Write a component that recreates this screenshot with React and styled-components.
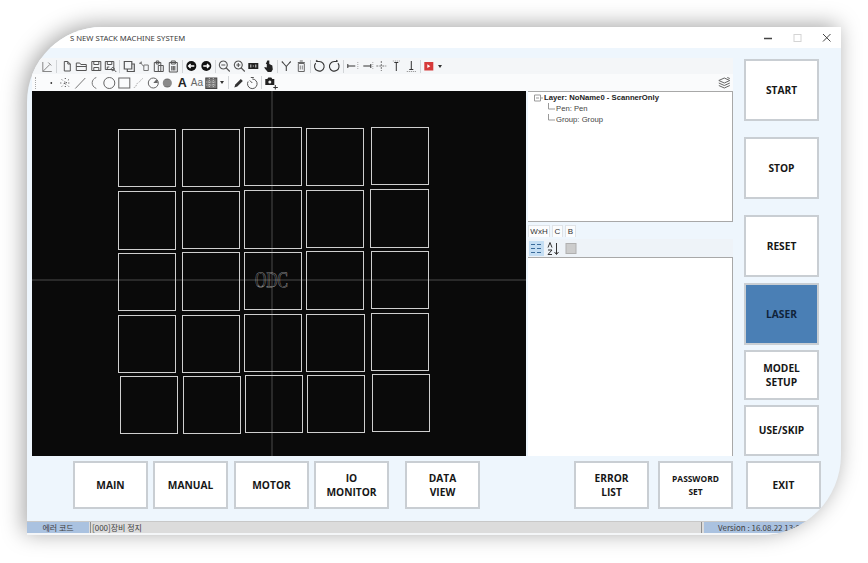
import React from 'react'
import styled, { createGlobalStyle } from 'styled-components'

const GlobalStyle = createGlobalStyle`
  html, body {
    margin: 0;
    padding: 0;
    background: #fff;
    overflow: hidden;
  }
`

const Page = styled.div`
  width: 868px;
  height: 563px;
  padding: 27px 0 0 27px;
  box-sizing: border-box;
  font-family: "Liberation Sans", Arial, sans-serif;
`

const Window = styled.div`
  width: 814px;
  height: 508px;
  display: flex;
  flex-direction: column;
  overflow: hidden;
  background: #eef6fd;
  border-radius: 75px 0 80px 0;
  box-shadow: -3px -2px 22px rgba(0, 0, 0, 0.36);
`

const TitleBar = styled.div`
  height: 21px;
  flex: none;
  display: flex;
  align-items: center;
  background: #fff;
  padding-left: 43px;
  font-family: "Noto Sans", sans-serif;
  font-size: 7.7px;
  color: #3a3a3a;
`

const TitleText = styled.span`
  flex: 1;
`

const WinButton = styled.svg`
  width: 29px;
  height: 14px;
  flex: none;
  stroke: ${p => p.$dim ? '#d4d4d4' : '#444'};
  fill: none;
`

const Main = styled.div`
  height: 408px;
  flex: none;
  display: flex;
  padding: 10px 0 0 5px;
  box-sizing: border-box;
`

const LeftColumn = styled.div`
  width: 701px;
  flex: none;
  display: flex;
  flex-direction: column;
`

const ToolRow = styled.div`
  height: ${p => p.$h}px;
  flex: none;
  display: flex;
  align-items: center;
  padding-left: ${p => p.$pad}px;
  background: ${p => p.$bg};
`

const Tool = styled.svg`
  width: 14.6px;
  height: 14px;
  flex: none;
  fill: none;
  stroke: #555;
  stroke-width: 1;
`

const TextTool = styled.span`
  width: 14.6px;
  flex: none;
  text-align: center;
  font-size: ${p => p.$size}px;
  font-weight: ${p => p.$bold ? 700 : 400};
  color: ${p => p.$bold ? '#222' : '#666'};
  line-height: 14px;
`

const Sep = styled.span`
  width: ${p => p.$w || 3.8}px;
  height: 13px;
  flex: none;
  display: flex;
  justify-content: center;
  &::before {
    content: '';
    width: 1px;
    background: #d2d5d8;
  }
`

const Caret = styled.span`
  width: 0;
  height: 0;
  flex: none;
  margin: 0 3px 0 1px;
  border: 2px solid transparent;
  border-top: 3px solid #333;
  border-bottom: 0;
`

const Grip = styled.span`
  width: 2px;
  height: 12px;
  flex: none;
  margin-right: 5.7px;
  border-left: 1px dotted #aaa;
`

const LayersIcon = styled(Tool)`
  margin-left: auto;
  margin-right: 1px;
`

const Workspace = styled.div`
  display: flex;
  gap: 2px;
  flex: 1;
  min-height: 0;
`

const Canvas = styled.svg`
  display: block;
  width: 494px;
  height: 365px;
  flex: none;
  background: #0a0a0a;
`

const CanvasLabel = styled.text`
  font-family: "Liberation Serif", serif;
  font-size: 22px;
  fill: none;
  stroke: #e2e2e2;
  stroke-width: 0.3;
  text-rendering: geometricPrecision;
`

const SidePanel = styled.div`
  flex: 1;
  display: flex;
  flex-direction: column;
`

const Tree = styled.div`
  height: 131px;
  flex: none;
  background: #fff;
  border: 1px solid #a8a8a8;
  border-width: 1px 1px 1px 0;
  box-sizing: border-box;
  padding: 0 0 0 6px;
  font-size: 7.7px;
  color: #333;
`

const TreeRow = styled.div`
  height: 11px;
  display: flex;
  align-items: center;
  margin-left: ${p => p.$indent || 0}px;
  font-weight: ${p => p.$bold ? 700 : 400};
  color: ${p => p.$bold ? '#222' : '#444'};
`

const TreeGlyph = styled.svg`
  width: ${p => p.$w}px;
  height: 11px;
  flex: none;
  margin-right: 1px;
  stroke: #999;
  fill: none;
`

const Tabs = styled.div`
  height: 16px;
  flex: none;
  display: flex;
  align-items: flex-end;
  gap: 2px;
  padding: 2px 0 1px;
  box-sizing: border-box;
`

const Tab = styled.div`
  width: ${p => p.$w}px;
  height: 12px;
  box-sizing: border-box;
  background: #fbfcfd;
  border: 1px solid #dfe3e7;
  border-bottom: 0;
  text-align: center;
  font-size: 8px;
  line-height: 11px;
  color: #333;
`

const PropBar = styled.div`
  height: 18px;
  flex: none;
  display: flex;
  align-items: center;
  margin-top: 1px;
  gap: 2px;
  padding-left: 1px;
  background: #eef3f8;
`

const PropTool = styled.svg`
  width: 15px;
  height: 15px;
  flex: none;
  fill: none;
  stroke: #555;
  background: ${p => p.$on ? '#c5def3' : 'transparent'};
`

const PropGrid = styled.div`
  flex: 1;
  background: #fff;
  border: 1px solid #a8a8a8;
  border-width: 1px 1px 0 0;
`

const RightColumn = styled.div`
  width: 75px;
  flex: none;
  margin: 1px 0 0 11px;
  display: flex;
  flex-direction: column;
`

const ActionButton = styled.div`
  width: 75px;
  height: ${p => p.$h}px;
  margin-top: ${p => p.$top || 0}px;
  margin-left: ${p => p.$left || 0}px;
  flex: none;
  box-sizing: border-box;
  padding-top: 1px;
  display: flex;
  align-items: center;
  justify-content: center;
  text-align: center;
  background: ${p => p.$active ? '#4a7fb5' : '#fff'};
  border: 2px solid #c9ced3;
  font-family: "Open Sans", sans-serif;
  font-weight: 700;
  font-size: ${p => p.$size || 10.2}px;
  line-height: ${p => p.$size ? 12.5 : 13.5}px;
  color: ${p => p.$active ? '#10233a' : '#161616'};
`

const Nav = styled.div`
  height: 48px;
  flex: none;
  margin-top: 5px;
  padding-left: 46px;
  display: flex;
`

const StatusBar = styled.div`
  height: 12px;
  flex: none;
  margin-top: 12px;
  display: flex;
  background: #dcdcdc;
  border-top: 1px solid #c8c8c8;
  box-sizing: border-box;
  font-family: "Noto Sans CJK KR", "Noto Sans", sans-serif;
  font-size: 8px;
  line-height: 11px;
  color: #404040;
`

const StatusCell = styled.div`
  flex: ${p => p.$w ? 'none' : 1};
  width: ${p => p.$w}px;
  box-sizing: border-box;
  padding-left: ${p => p.$pad || 0}px;
  text-align: ${p => p.$center ? 'center' : 'left'};
  background: ${p => p.$blue ? '#aac2e0' : 'transparent'};
  border-right: ${p => p.$line ? '1px solid #8f8f8f' : '0'};
  white-space: nowrap;
  overflow: hidden;
`

const BottomEdge = styled.div`
  height: 2px;
  flex: none;
  background: #f4f6f8;
`

const rects = [
  [118, 129, 57, 57], [182, 129, 57, 57], [244, 127, 57, 58], [306, 128, 57, 57], [371, 127, 57, 57],
  [118, 191, 57, 58], [182, 191, 57, 57], [244, 190, 57, 58], [306, 190, 57, 57], [370, 189, 58, 58],
  [118, 253, 57, 57], [182, 252, 57, 58], [244, 252, 57, 57], [306, 251, 57, 58], [371, 251, 57, 57],
  [118, 315, 57, 57], [182, 315, 57, 57], [244, 314, 57, 57], [306, 314, 58, 57], [371, 313, 57, 57],
  [120, 376, 57, 57], [183, 376, 57, 57], [245, 375, 57, 57], [307, 375, 57, 57], [372, 374, 57, 57],
]

const glyphs = {
  sketch: <path d="M2.5 3v9.5h9M2.5 12.5l7-7M8 3.5l3 3" stroke="#888" />,
  doc: <path d="M4 2.500h3.500l2.500 2.500v7H4zM7.500 2.500V5H10" />,
  folder: <path d="M2 4h3.500l1 1.500H12v6H2zM2 7.500h10" />,
  save: <path d="M2.500 2.500h9v9h-9zM4.500 2.500v3h5v-3M4.500 11.500V8.500h5v3" />,
  saveAs: <path d="M2 2.500h8.500v8H2zM4 2.500v3h4.500v-3M4 10.500V8h2M9.500 8.500a1.600 1.600 0 1 0 .01 0M11 11l2 2" />,
  copy: <path d="M2 2.500h7.500v7.500H2zM9.500 5H12v7.500H5V10" strokeWidth="1.200" />,
  cut: <path d="M3.500 3l4 4.500M3 4.500h2v-2M7.500 6h4.500v5.500H7.500z" stroke="#777" />,
  paste: <path d="M3 3.500h6.500v9H3zM5 2h2.500v3H5zM7 6.500h5v6H7z" />,
  board: <><path d="M3 3.500h8v9.500H3zM5 2h4v3H5z" /><path d="M5.500 7v4.500M7 7v4.500M8.500 7v4.500" strokeWidth="1.100" /></>,
  back: <><circle cx="7" cy="7" r="5" fill="#111" stroke="none" /><path d="M10 7H4.500M6.300 5L4.300 7l2 2" stroke="#fff" strokeWidth="1.400" /></>,
  forward: <><circle cx="7" cy="7" r="5" fill="#111" stroke="none" /><path d="M4 7h5.500M7.700 5l2 2-2 2" stroke="#fff" strokeWidth="1.400" /></>,
  zoomOut: <path d="M6 2a4 4 0 1 0 .01 0M9 9l3.500 3.500M4 6h4" strokeWidth="1.100" />,
  zoomIn: <path d="M6 2a4 4 0 1 0 .01 0M9 9l3.500 3.500M4 6h4M6 4v4" strokeWidth="1.100" />,
  fit: <><rect x="2" y="4" width="10" height="6" fill="#222" stroke="none" /><path d="M4.500 5.500v3M7 6v.5M7 7.500V8M9.500 5.500v3" stroke="#ddd" /></>,
  hand: <path d="M6 1.500h2V5l3 1.500.5 4L10 13H6.500L3.500 9.500 3 8l2.500.5V5H4.500z" fill="#222" stroke="none" />,
  fork: <path d="M3.500 3.500L7 7.500l3.500-4M7 7.500V12M2.500 2.500l1.500 1.500M11.500 2.500L10 4" strokeWidth="1.100" stroke="#444" />,
  trash: <><path d="M4 4.500h6v8H4zM3.500 3.500h7M5.500 2h3" stroke="#666" /><path d="M6 6.500v4M8 6.500v4" stroke="#888" /></>,
  rotateLeft: <path d="M7 2.500a4.800 4.800 0 1 1-3.600 1.700M7 2.500H3.700M5 1.200L3.700 2.500" strokeWidth="1.100" stroke="#333" />,
  rotateRight: <path d="M7 2.500a4.800 4.800 0 1 0 3.600 1.700M7 2.500h3.300M9 1.200l1.300 1.300" strokeWidth="1.100" stroke="#333" />,
  alignLeft: <><path d="M2.500 5v4M2.500 7H10" stroke="#333" /><path d="M12.500 3v8" strokeDasharray="1 1" stroke="#aaa" /></>,
  alignRight: <><path d="M10.500 5v4M3 7h7.500" stroke="#333" /><path d="M12.500 3v8" strokeDasharray="1 1" stroke="#aaa" /></>,
  alignCross: <path d="M7 2v10M2 7h10" strokeDasharray="2 1" stroke="#777" />,
  alignTop: <><path d="M7 3v9M5 3.500h4" stroke="#333" /><path d="M3.500 2h7" strokeDasharray="1 1" stroke="#999" /></>,
  alignBottom: <><path d="M7 2v9M5 10.500h4" stroke="#333" /><path d="M2.500 12.500h9" strokeDasharray="1 1" stroke="#888" /></>,
  movie: <><rect x="2" y="3" width="9" height="8.500" fill="#d63a3a" stroke="none" /><path d="M5 5.300l3 1.900-3 1.900z" fill="#fff" stroke="none" /></>,
  dot: <circle cx="7" cy="7" r="0.900" fill="#333" stroke="none" />,
  scatter: <path d="M7 2v2M7 10v2M2 7h2M10 7h2M3.500 3.500L5 5M10.500 3.500L9 5M3.500 10.500L5 9M10.500 10.500L9 9M6 6h2v2H6z" strokeDasharray="1 1" stroke="#444" />,
  line: <path d="M2 12.500L12 2" stroke="#777" />,
  arc: <path d="M9 1.500C4 3 3 10 9 12.500" stroke="#777" />,
  circle: <circle cx="7" cy="7" r="5.500" stroke="#666" />,
  square: <rect x="1.500" y="2" width="11" height="10" stroke="#666" />,
  curve: <path d="M2.500 11.500c3 0 2-4 4.500-5s2-3 4.500-4" strokeDasharray="1.500 1" stroke="#aaa" />,
  pie: <><circle cx="7" cy="7" r="5" stroke="#666" /><path d="M7 7h4.500a4.500 4.500 0 0 0-1.500-3.400z" fill="#666" stroke="none" /></>,
  sphere: <><circle cx="7" cy="7" r="4.500" fill="#777" stroke="none" /><path d="M3 5h8M2.500 7h9M3 9h8" stroke="#bbb" strokeWidth="0.600" /></>,
  hatch: <><rect x="1.500" y="2" width="11" height="10.500" fill="#777" stroke="#444" /><path d="M2 6h10M2 9h10M5 2v10M9 2v10" stroke="#ccc" strokeDasharray="1 1" /></>,
  pencil: <path d="M3 11.500l1-3 5.500-5.500 2 2L6 10.500z" fill="#333" stroke="none" />,
  timer: <path d="M7 3a4.800 4.800 0 1 1-4.200 2.500M7 7L4.500 4.500M5.500 1.500h3" stroke="#555" />,
  camera: <><path d="M1 3h2l1-1.500h3L8 3h2v6H1z" fill="#222" stroke="none" /><circle cx="5.500" cy="6" r="1.500" fill="#eee" stroke="none" /><path d="M11 9v4.500M9 11.500h4.500" stroke="#333" /></>,
  layers: <path d="M7 2l5.500 2.500L7 7 1.500 4.500zM1.500 7L7 9.500 12.500 7M1.500 9.500L7 12l5.500-2.500M10 1.500l2.500 1" stroke="#666" />,
}

const Icon = ({ name }) => <Tool viewBox="0 0 14 14">{glyphs[name]}</Tool>

const Cluster = ({ names }) => names.map(name => <Icon key={name} name={name} />)

function App() {
  return (
    <Page>
      <GlobalStyle />
      <Window>
        <TitleBar>
          <TitleText>S NEW STACK MACHINE SYSTEM</TitleText>
          <WinButton viewBox="0 0 29 14"><path d="M10 7.500h8" strokeWidth="1.300" /></WinButton>
          <WinButton viewBox="0 0 29 14" $dim><rect x="11" y="3.500" width="7" height="7" /></WinButton>
          <WinButton viewBox="0 0 29 14"><path d="M11 3l7.500 7.500M18.500 3L11 10.500" /></WinButton>
        </TitleBar>

        <Main>
          <LeftColumn>
            <ToolRow $h={16} $pad={7.7} $bg="#f4f6f8">
              <Icon name="sketch" />
              <Sep $w={5.4} />
              <Cluster names={['doc', 'folder', 'save', 'saveAs']} />
              <Sep />
              <Cluster names={['copy', 'cut', 'paste', 'board']} />
              <Sep />
              <Cluster names={['back', 'forward']} />
              <Sep />
              <Cluster names={['zoomOut', 'zoomIn', 'fit', 'hand']} />
              <Sep />
              <Cluster names={['fork', 'trash']} />
              <Sep />
              <Cluster names={['rotateLeft', 'rotateRight']} />
              <Sep />
              <Cluster names={['alignLeft', 'alignRight', 'alignCross', 'alignTop', 'alignBottom']} />
              <Sep />
              <Icon name="movie" />
              <Caret />
            </ToolRow>
            <ToolRow $h={17} $pad={3} $bg="#fafbfc">
              <Grip />
              <Cluster names={['dot', 'scatter', 'line', 'arc', 'circle', 'square', 'curve', 'pie', 'sphere']} />
              <TextTool $size={12.5} $bold>A</TextTool>
              <TextTool $size={10}>Aa</TextTool>
              <Icon name="hatch" />
              <Caret />
              <Sep />
              <Icon name="pencil" />
              <Icon name="timer" />
              <Sep />
              <Icon name="camera" />
              <LayersIcon viewBox="0 0 14 14">{glyphs.layers}</LayersIcon>
            </ToolRow>

            <Workspace>
              <Canvas viewBox="32 91 494 365">
                <path d="M272 91V456M32 280H526" stroke="#4a4a4a" fill="none" />
                {rects.map(([x, y, w, h]) => (
                  <rect key={`${x}-${y}`} x={x + 0.5} y={y + 0.5} width={w} height={h} fill="none" stroke="#cfcfcf" />
                ))}
                <CanvasLabel x="255" y="287" textLength="33" lengthAdjust="spacingAndGlyphs">ODC</CanvasLabel>
              </Canvas>

              <SidePanel>
                <Tree>
                  <TreeRow $bold>
                    <TreeGlyph $w={9} viewBox="0 0 9 11"><path d="M0.500 3h6v6h-6zM2 6h3M7 6h2" /></TreeGlyph>
                    Layer: NoName0 - ScannerOnly
                  </TreeRow>
                  <TreeRow $indent={14}>
                    <TreeGlyph $w={7} viewBox="0 0 7 11"><path d="M0.500 0v6H7" /></TreeGlyph>
                    Pen: Pen
                  </TreeRow>
                  <TreeRow $indent={14}>
                    <TreeGlyph $w={7} viewBox="0 0 7 11"><path d="M0.500 0v6H7" /></TreeGlyph>
                    Group: Group
                  </TreeRow>
                </Tree>
                <Tabs>
                  <Tab $w={22}>WxH</Tab>
                  <Tab $w={11}>C</Tab>
                  <Tab $w={11}>B</Tab>
                </Tabs>
                <PropBar>
                  <PropTool viewBox="0 0 15 15" $on>
                    <path d="M2 3.500h4M2 7.500h4M2 11.500h4M8 3.500h4M8 7.500h4M8 11.500h4" stroke="#3b6c9b" />
                  </PropTool>
                  <PropTool viewBox="0 0 15 15">
                    <path d="M2 6.500l2-5 2 5M2 9h4l-4 4.500h4M10.500 2v11M8.500 11l2 2.500 2-2.500" stroke="#333" />
                  </PropTool>
                  <PropTool viewBox="0 0 15 15">
                    <rect x="3" y="2.500" width="10" height="10" fill="#ccc" stroke="#b0b0b0" />
                  </PropTool>
                </PropBar>
                <PropGrid />
              </SidePanel>
            </Workspace>
          </LeftColumn>

          <RightColumn>
            <ActionButton $h={62}>START</ActionButton>
            <ActionButton $h={62} $top={16}>STOP</ActionButton>
            <ActionButton $h={62} $top={16}>RESET</ActionButton>
            <ActionButton $h={62} $top={6} $active>LASER</ActionButton>
            <ActionButton $h={50} $top={5}>MODEL<br />SETUP</ActionButton>
            <ActionButton $h={51} $top={5}>USE/SKIP</ActionButton>
          </RightColumn>
        </Main>

        <Nav>
          <ActionButton $h={48}>MAIN</ActionButton>
          <ActionButton $h={48} $left={5}>MANUAL</ActionButton>
          <ActionButton $h={48} $left={6}>MOTOR</ActionButton>
          <ActionButton $h={48} $left={5}>IO<br />MONITOR</ActionButton>
          <ActionButton $h={48} $left={16}>DATA<br />VIEW</ActionButton>
          <ActionButton $h={48} $left={94}>ERROR<br />LIST</ActionButton>
          <ActionButton $h={48} $left={9} $size={8.4}>PASSWORD<br />SET</ActionButton>
          <ActionButton $h={48} $left={13}>EXIT</ActionButton>
        </Nav>

        <StatusBar>
          <StatusCell $w={62} $blue $center>에러 코드</StatusCell>
          <StatusCell $w={2} $line />
          <StatusCell $w={611} $pad={1} $line>[000]장비 정지</StatusCell>
          <StatusCell $w={2} />
          <StatusCell $blue $pad={14}>Version : 16.08.22 13:00</StatusCell>
        </StatusBar>
        <BottomEdge />
      </Window>
    </Page>
  )
}

export default App
